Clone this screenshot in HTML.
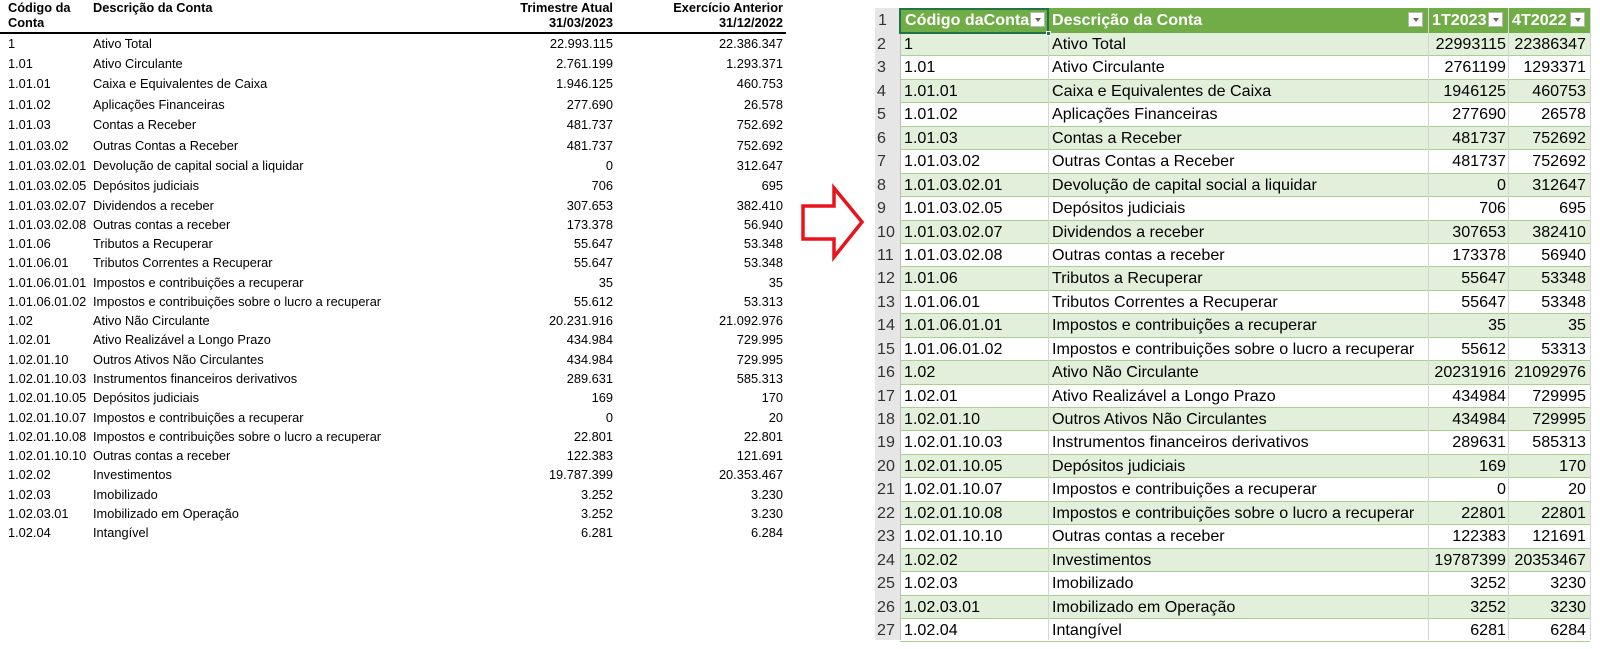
<!DOCTYPE html>
<html><head><meta charset="utf-8"><style>
*{margin:0;padding:0;box-sizing:border-box}
body{width:1600px;height:649px;background:#fff;position:relative;overflow:hidden;font-family:"Liberation Sans",Arial,sans-serif}
.l{position:absolute;font-size:12.8px;color:#000;white-space:nowrap;line-height:15px}
.hd{font-weight:bold}
.r{text-align:right}
.x{position:absolute;font-size:16.1px;color:#000;white-space:nowrap;line-height:23.44px;height:23.44px}
.row{position:absolute;left:900px;width:690px;height:23.44px;border-bottom:1px solid #a9d08e}
.g{background:#e2efda}
.vl{position:absolute;top:8px;width:1px;background:#d4d4d4;height:632px}
.dd{position:absolute;top:12px;width:15px;height:15px;background:#fff;border:1px solid #b7b7b7}
.dd:after{content:"";position:absolute;left:4px;top:5px;border-left:3px solid transparent;border-right:3px solid transparent;border-top:4px solid #666}
</style></head><body>

<div class="l hd" style="left:8px;top:0px">Código da<br>Conta</div>
<div class="l hd" style="left:93px;top:0px">Descrição da Conta</div>
<div class="l hd r" style="left:463px;width:150px;top:0px">Trimestre Atual<br>31/03/2023</div>
<div class="l hd r" style="left:633px;width:150px;top:0px">Exercício Anterior<br>31/12/2022</div>
<div style="position:absolute;left:0;top:32px;width:786px;height:2px;background:#000"></div>
<div id="left"></div>

<svg style="position:absolute;left:0;top:0" width="1600" height="649"><polygon points="803,206 834,206 834,188 862,222 834,257 834,239 803,239" fill="none" stroke="#e8141c" stroke-width="3.5" stroke-linejoin="miter"/></svg>

<div style="position:absolute;left:875px;top:8px;width:25px;height:632px;background:#e6e6e6"></div>
<div style="position:absolute;left:900px;top:8px;width:690px;height:25px;background:#70ad47"></div>
<div id="right"></div>
<div class="vl" style="left:900px;background:#bdbdbd"></div>
<div class="vl" style="left:1048px"></div>
<div class="vl" style="left:1428px"></div>
<div class="vl" style="left:1508px"></div>
<div class="vl" style="left:1590px"></div>
<div style="position:absolute;left:899px;top:8px;width:150px;height:26px;border:2px solid #217346"></div>
<div style="position:absolute;left:1046px;top:31px;width:5px;height:5px;background:#217346;border:1px solid #fff"></div>
<div class="x" style="left:905px;top:8px;color:#fff;font-weight:bold;line-height:25px">Código daConta</div>
<div class="x" style="left:1052px;top:8px;color:#fff;font-weight:bold;line-height:25px">Descrição da Conta</div>
<div class="x" style="left:1432px;top:8px;color:#fff;font-weight:bold;line-height:25px">1T2023</div>
<div class="x" style="left:1512px;top:8px;color:#fff;font-weight:bold;line-height:25px">4T2022</div>
<div class="dd" style="left:1030px"></div>
<div class="dd" style="left:1408px"></div>
<div class="dd" style="left:1488px"></div>
<div class="dd" style="left:1570px"></div>
<div class="x" style="left:878px;top:8px;line-height:25px;color:#333">1</div>

<script>
var d=[["1","Ativo Total","22.993.115","22.386.347"],["1.01","Ativo Circulante","2.761.199","1.293.371"],["1.01.01","Caixa e Equivalentes de Caixa","1.946.125","460.753"],["1.01.02","Aplicações Financeiras","277.690","26.578"],["1.01.03","Contas a Receber","481.737","752.692"],["1.01.03.02","Outras Contas a Receber","481.737","752.692"],["1.01.03.02.01","Devolução de capital social a liquidar","0","312.647"],["1.01.03.02.05","Depósitos judiciais","706","695"],["1.01.03.02.07","Dividendos a receber","307.653","382.410"],["1.01.03.02.08","Outras contas a receber","173.378","56.940"],["1.01.06","Tributos a Recuperar","55.647","53.348"],["1.01.06.01","Tributos Correntes a Recuperar","55.647","53.348"],["1.01.06.01.01","Impostos e contribuições a recuperar","35","35"],["1.01.06.01.02","Impostos e contribuições sobre o lucro a recuperar","55.612","53.313"],["1.02","Ativo Não Circulante","20.231.916","21.092.976"],["1.02.01","Ativo Realizável a Longo Prazo","434.984","729.995"],["1.02.01.10","Outros Ativos Não Circulantes","434.984","729.995"],["1.02.01.10.03","Instrumentos financeiros derivativos","289.631","585.313"],["1.02.01.10.05","Depósitos judiciais","169","170"],["1.02.01.10.07","Impostos e contribuições a recuperar","0","20"],["1.02.01.10.08","Impostos e contribuições sobre o lucro a recuperar","22.801","22.801"],["1.02.01.10.10","Outras contas a receber","122.383","121.691"],["1.02.02","Investimentos","19.787.399","20.353.467"],["1.02.03","Imobilizado","3.252","3.230"],["1.02.03.01","Imobilizado em Operação","3.252","3.230"],["1.02.04","Intangível","6.281","6.284"]];
var L="",R="";
d.forEach(function(r,i){
 var c=i<=7?43+i*20.4:185.8+(i-7)*19.27;
 var y=c-7.5;
 L+='<div class="l" style="left:8px;top:'+y+'px">'+r[0]+'</div><div class="l" style="left:93px;top:'+y+'px">'+r[1]+'</div><div class="l r" style="left:463px;width:150px;top:'+y+'px">'+r[2]+'</div><div class="l r" style="left:633px;width:150px;top:'+y+'px">'+r[3]+'</div>';
 var t=33+i*23.44;
 R+='<div class="row'+(i%2==0?' g':'')+'" style="top:'+t+'px"></div>';
 R+='<div class="x" style="left:877px;top:'+t+'px;color:#333">'+(i+2)+'</div>';
 R+='<div class="x" style="left:904px;top:'+t+'px">'+r[0]+'</div><div class="x" style="left:1052px;top:'+t+'px">'+r[1]+'</div>';
 R+='<div class="x r" style="left:1430px;width:76px;top:'+t+'px">'+r[2].replace(/\./g,'')+'</div><div class="x r" style="left:1508px;width:78px;top:'+t+'px">'+r[3].replace(/\./g,'')+'</div>';
});
document.getElementById('left').innerHTML=L;
document.getElementById('right').innerHTML=R;
</script>
</body></html>
